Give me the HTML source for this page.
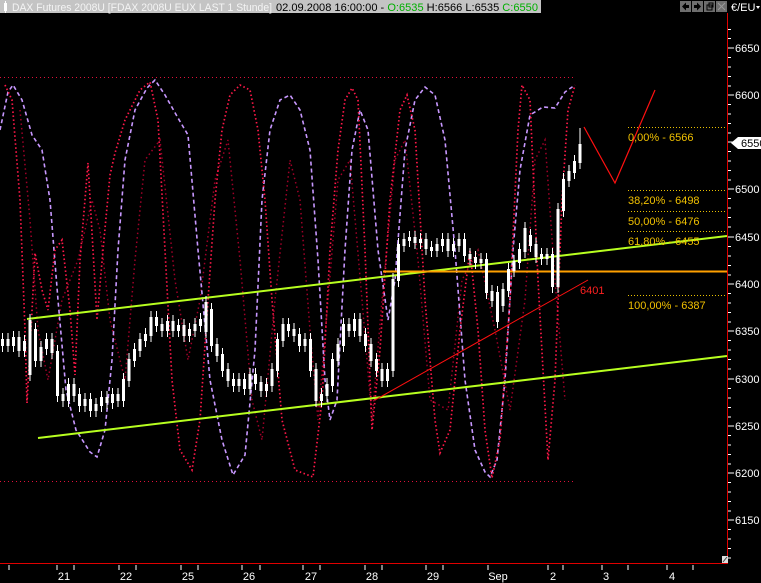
<!DOCTYPE html>
<html><head><meta charset="utf-8"><style>
html,body{margin:0;padding:0;background:#000;width:761px;height:583px;overflow:hidden}
svg{display:block}
text{font-family:"Liberation Sans",sans-serif}
</style></head><body>
<svg width="761" height="583" viewBox="0 0 761 583" xmlns="http://www.w3.org/2000/svg">
<rect width="761" height="583" fill="#000"/>
<!-- title bar -->
<rect x="0" y="0" width="541" height="13" fill="#c4c4c4"/>
<rect x="4" y="3" width="3" height="8" fill="#fff"/><rect x="5" y="1" width="1" height="12" fill="#fff"/>
<text x="12" y="11" font-size="11" fill="#f4f4f4" textLength="260" lengthAdjust="spacingAndGlyphs">DAX Futures 2008U [FDAX 2008U EUX LAST 1 Stunde]</text>
<text x="276" y="11" font-size="11" fill="#000" textLength="262" lengthAdjust="spacingAndGlyphs">02.09.2008 16:00:00 - <tspan fill="#00b000">O:6535</tspan> H:6566 L:6535 <tspan fill="#00b000">C:6550</tspan></text>
<g fill="#6e6e6e"><rect x="680" y="1" width="11" height="11"/><rect x="692" y="1" width="11" height="11"/><rect x="704" y="1" width="11" height="11"/><rect x="716" y="1" width="11" height="11"/></g>
<g fill="#000"><path d="M682 6.5l4-4v2.5h3v3h-3v2.5z"/><path d="M701 6.5l-4-4v2.5h-3v3h3v2.5z"/><rect x="707" y="5" width="5" height="5" fill="none" stroke="#000"/><rect x="709" y="3" width="4" height="4" fill="none" stroke="#000"/><path d="M718 3l7 7M725 3l-7 7" stroke="#999"/></g>
<text x="731" y="11" font-size="11" fill="#fff">€/EU</text><path d="M756 6h4l-2 3z" fill="#fff"/>
<!-- frame -->
<line x1="727.5" y1="13" x2="727.5" y2="564" stroke="#e00000"/>
<line x1="0" y1="563.5" x2="728" y2="563.5" stroke="#e00000"/>
<!-- axis ticks -->
<g stroke="#fff">
<path d="M728 29.5h3M728 38.5h3M728 48h6M728 57.5h3M728 67h3M728 76.5h3M728 86h3M728 95h6M728 104.5h3M728 114h3M728 123.5h3M728 133h3M728 142h6M728 151.5h3M728 161h3M728 170.5h3M728 180h3M728 189h6M728 198.5h3M728 208h3M728 217.5h3M728 227h3M728 237h6M728 246.5h3M728 256h3M728 265.5h3M728 275h3M728 284h6M728 293.5h3M728 303h3M728 312.5h3M728 322h3M728 331h6M728 340.5h3M728 350h3M728 359.5h3M728 369h3M728 379h6M728 388.5h3M728 398h3M728 407.5h3M728 417h3M728 426h6M728 435.5h3M728 445h3M728 454.5h3M728 464h3M728 473h6M728 482.5h3M728 492h3M728 501.5h3M728 511h3M728 520h6M728 529.5h3M728 539h3M728 548.5h3M728 558h3"/>
<path d="M9 565v5M57 565v5M74 565v5M119 565v5M136 565v5M181 565v5M198 565v5M242 565v5M260 565v5M303 565v5M320 565v5M365 565v5M382 565v5M426 565v5M443 565v5M488 565v5M548 565v5M563 565v5M602 565v5M628 565v5M667 565v5M693 565v5"/>
</g>
<g font-size="11" fill="#fff">
<text x="735" y="52">6650</text><text x="735" y="99">6600</text><text x="735" y="193">6500</text><text x="735" y="241">6450</text><text x="735" y="288">6400</text><text x="735" y="335">6350</text><text x="735" y="383">6300</text><text x="735" y="430">6250</text><text x="735" y="477">6200</text><text x="735" y="524">6150</text>
</g>
<path d="M731 143l7-6h23v12h-23z" fill="#fff"/><text x="741" y="147" font-size="11" fill="#000">6550</text>
<path d="M722 556h6v7h-6z" fill="#ddd"/><path d="M723 562l4-5" stroke="#444"/>
<g font-size="11" fill="#fff" text-anchor="middle">
<text x="64" y="580">21</text><text x="126" y="580">22</text><text x="188" y="580">25</text><text x="249" y="580">26</text><text x="311" y="580">27</text><text x="372" y="580">28</text><text x="433" y="580">29</text><text x="498" y="580">Sep</text><text x="553" y="580">2</text><text x="606" y="580">3</text><text x="672" y="580">4</text>
</g>
<!-- dotted boundary lines -->
<line x1="0" y1="77.5" x2="576" y2="77.5" stroke="#e0103a" stroke-dasharray="1 3"/>
<line x1="0" y1="481.5" x2="576" y2="481.5" stroke="#e0103a" stroke-dasharray="1 3"/>
<!-- oscillators -->
<polyline fill="none" stroke="#a00028" stroke-width="1.5" stroke-dasharray="1.5 3" points="20,110 30,220 38,330 48,380 62,300 78,260 92,200 100,230 110,320 125,380 135,260 145,160 160,140 175,280 188,360 200,300 215,180 228,140 240,260 252,400 262,440 275,300 290,160 300,200 310,330 318,420 328,300 338,180 350,160 362,300 372,420 382,300 395,160 405,140 418,260 430,400 448,410 462,280 478,250 495,330 510,410 525,300 535,160 545,140 555,280 565,400"/>
<polyline fill="none" stroke="#c898ff" stroke-width="1.6" stroke-dasharray="4 3" points="0,130 8,92 13,85 22,100 32,135 42,150 50,200 58,300 66,390 76,430 90,452 97,457 105,430 112,360 118,250 125,160 135,110 147,88 155,80 165,95 178,118 188,135 198,250 210,380 222,440 233,475 245,455 255,350 262,200 270,130 280,100 290,95 300,110 310,150 318,260 325,380 330,420 337,400 345,250 352,150 360,110 368,130 378,250 388,320 395,280 405,150 415,100 425,87 435,95 445,140 455,250 465,380 475,450 485,472 490,477 497,460 505,380 513,250 520,170 530,115 543,107 555,108 565,92 575,85"/>
<polyline fill="none" stroke="#ff1848" stroke-width="1.7" stroke-dasharray="1.5 2.5" points="5,85 12,100 20,200 25,330 27,403 31,330 35,253 42,290 48,310 55,250 62,240 70,310 75,375 80,260 88,163 93,250 97,320 103,250 110,175 115,153 125,120 140,90 150,82 158,120 165,250 172,380 180,450 192,470 200,420 208,300 215,200 222,130 230,95 240,85 250,90 258,130 265,200 272,300 282,420 295,470 313,477 322,400 330,250 338,150 345,100 352,88 358,100 365,250 372,430 380,350 390,200 400,110 407,95 415,130 425,300 435,420 440,453 450,430 460,330 470,250 478,330 485,430 492,478 500,440 510,300 518,130 522,85 530,100 538,280 548,460 555,380 562,200 568,110 575,85"/>
<!-- channel lines -->
<line x1="27" y1="319" x2="727" y2="236" stroke="#b8ff20" stroke-width="2"/>
<line x1="38" y1="438" x2="727" y2="356" stroke="#b8ff20" stroke-width="2"/>
<line x1="383" y1="271.5" x2="727" y2="271.5" stroke="#ffa000" stroke-width="2"/>
<line x1="375" y1="400" x2="588" y2="280" stroke="#ff1010" stroke-width="1"/>
<text x="580" y="294" font-size="11" fill="#ff2020">6401</text>
<polyline fill="none" stroke="#ff1010" stroke-width="1.2" points="584,127 615,183 655,90"/>
<!-- fib -->
<g stroke="#e8c000" stroke-dasharray="1 2"><line x1="628" y1="127.5" x2="727" y2="127.5"/><line x1="628" y1="190.5" x2="727" y2="190.5"/><line x1="628" y1="211.5" x2="727" y2="211.5"/><line x1="628" y1="231.5" x2="727" y2="231.5"/><line x1="628" y1="295.5" x2="727" y2="295.5"/></g>
<g font-size="11" fill="#f0c000"><text x="628" y="141">0,00% - 6566</text><text x="628" y="204">38,20% - 6498</text><text x="628" y="225">50,00% - 6476</text><text x="628" y="245">61,80% - 6455</text><text x="628" y="309">100,00% - 6387</text></g>
<!-- candles -->
<g fill="#fff">
<rect x="1" y="339" width="3" height="7"/><rect x="6.5" y="339" width="3" height="7"/><rect x="12" y="337" width="3" height="9"/><rect x="17.5" y="337" width="3" height="14"/><rect x="23" y="341" width="3" height="10"/><rect x="28.5" y="320" width="3" height="55"/><rect x="34" y="329" width="3" height="32"/><rect x="39.5" y="347" width="3" height="14"/><rect x="45" y="339" width="3" height="10"/><rect x="50.5" y="339" width="3" height="14"/><rect x="56" y="351" width="3" height="45"/><rect x="61.5" y="394" width="3" height="7"/><rect x="67" y="384" width="3" height="17"/><rect x="72.5" y="384" width="3" height="12"/><rect x="78" y="394" width="3" height="12"/><rect x="83.5" y="399" width="3" height="7"/><rect x="89" y="399" width="3" height="12"/><rect x="94.5" y="404" width="3" height="7"/><rect x="100" y="397" width="3" height="9"/><rect x="105.5" y="397" width="3" height="6"/><rect x="111" y="394" width="3" height="9"/><rect x="116.5" y="394" width="3" height="7"/><rect x="122" y="379" width="3" height="22"/><rect x="127.5" y="359" width="3" height="22"/><rect x="133" y="349" width="3" height="12"/><rect x="138.5" y="339" width="3" height="12"/><rect x="144" y="334" width="3" height="7"/><rect x="149.5" y="317" width="3" height="19"/><rect x="155" y="317" width="3" height="9"/><rect x="160.5" y="324" width="3" height="7"/><rect x="166" y="321" width="3" height="10"/><rect x="171.5" y="321" width="3" height="10"/><rect x="177" y="325" width="3" height="6"/><rect x="182.5" y="325" width="3" height="11"/><rect x="188" y="329" width="3" height="7"/><rect x="193.5" y="324" width="3" height="7"/><rect x="199" y="319" width="3" height="7"/><rect x="204.5" y="302" width="3" height="30"/><rect x="210" y="309" width="3" height="37"/><rect x="215.5" y="344" width="3" height="12"/><rect x="221" y="354" width="3" height="17"/><rect x="226.5" y="369" width="3" height="12"/><rect x="232" y="379" width="3" height="7"/><rect x="237.5" y="379" width="3" height="7"/><rect x="243" y="379" width="3" height="10"/><rect x="248.5" y="374" width="3" height="15"/><rect x="254" y="374" width="3" height="10"/><rect x="259.5" y="382" width="3" height="9"/><rect x="265" y="384" width="3" height="7"/><rect x="270.5" y="369" width="3" height="17"/><rect x="276" y="339" width="3" height="32"/><rect x="281.5" y="324" width="3" height="17"/><rect x="287" y="324" width="3" height="7"/><rect x="292.5" y="329" width="3" height="7"/><rect x="298" y="334" width="3" height="12"/><rect x="303.5" y="339" width="3" height="7"/><rect x="309" y="339" width="3" height="32"/><rect x="314.5" y="369" width="3" height="32"/><rect x="320" y="394" width="3" height="7"/><rect x="325.5" y="384" width="3" height="12"/><rect x="331" y="359" width="3" height="27"/><rect x="336.5" y="344" width="3" height="17"/><rect x="342" y="324" width="3" height="22"/><rect x="347.5" y="324" width="3" height="7"/><rect x="353" y="319" width="3" height="12"/><rect x="358.5" y="319" width="3" height="17"/><rect x="364" y="334" width="3" height="12"/><rect x="369.5" y="344" width="3" height="17"/><rect x="375" y="359" width="3" height="12"/><rect x="380.5" y="369" width="3" height="12"/><rect x="386" y="369" width="3" height="12"/><rect x="391.5" y="279" width="3" height="92"/><rect x="397" y="244" width="3" height="37"/><rect x="402.5" y="239" width="3" height="7"/><rect x="408" y="237" width="3" height="4"/><rect x="413.5" y="237" width="3" height="6"/><rect x="419" y="239" width="3" height="4"/><rect x="424.5" y="239" width="3" height="10"/><rect x="430" y="247" width="3" height="4"/><rect x="435.5" y="244" width="3" height="7"/><rect x="441" y="239" width="3" height="7"/><rect x="446.5" y="239" width="3" height="12"/><rect x="452" y="244" width="3" height="7"/><rect x="457.5" y="239" width="3" height="7"/><rect x="463" y="239" width="3" height="17"/><rect x="468.5" y="254" width="3" height="5"/><rect x="474" y="257" width="3" height="6"/><rect x="479.5" y="259" width="3" height="4"/><rect x="485" y="259" width="3" height="34"/><rect x="490.5" y="291" width="3" height="10"/><rect x="496" y="292" width="3" height="30"/><rect x="501.5" y="289" width="3" height="17"/><rect x="507" y="269" width="3" height="22"/><rect x="512.5" y="261" width="3" height="10"/><rect x="518" y="249" width="3" height="14"/><rect x="523.5" y="228" width="3" height="24"/><rect x="529" y="235" width="3" height="11"/><rect x="534.5" y="244" width="3" height="13"/><rect x="540" y="254" width="3" height="5"/><rect x="545.5" y="254" width="3" height="5"/><rect x="551" y="254" width="3" height="33"/><rect x="556.5" y="209" width="3" height="78"/><rect x="562" y="179" width="3" height="32"/><rect x="567.5" y="171" width="3" height="10"/><rect x="573" y="161" width="3" height="12"/><rect x="578.5" y="144" width="3" height="19"/>
</g>
<path stroke="#fff" stroke-width="1" fill="none" d="M2.5 333v19M8 333v19M13.5 331v21M19 331v26M24.5 335v22M30 314v67M35.5 323v44M41 341v26M46.5 333v22M52 333v26M57.5 345v57M63 388v19M68.5 378v29M74 378v24M79.5 388v24M85 393v19M90.5 393v24M96 398v19M101.5 391v21M107 391v18M112.5 388v21M118 388v19M123.5 373v34M129 353v34M134.5 343v24M140 333v24M145.5 328v19M151 311v31M156.5 311v21M162 318v19M167.5 315v22M173 315v22M178.5 319v18M184 319v23M189.5 323v19M195 318v19M200.5 313v19M206 296v42M211.5 303v49M217 338v24M222.5 348v29M228 363v24M233.5 373v19M239 373v19M244.5 373v22M250 368v27M255.5 368v22M261 376v21M266.5 378v19M272 363v29M277.5 333v44M283 318v29M288.5 318v19M294 323v19M299.5 328v24M305 333v19M310.5 333v44M316 363v44M321.5 388v19M327 378v24M332.5 353v39M338 338v29M343.5 318v34M349 318v19M354.5 313v24M360 313v29M365.5 328v24M371 338v29M376.5 353v24M382 363v24M387.5 363v24M393 273v104M398.5 238v49M404 233v19M409.5 231v16M415 231v18M420.5 233v16M426 233v22M431.5 241v16M437 238v19M442.5 233v19M448 233v24M453.5 238v19M459 233v19M464.5 233v29M470 248v17M475.5 251v18M481 253v16M486.5 253v46M492 285v22M497.5 286v42M503 283v29M508.5 263v34M514 255v22M519.5 243v26M525 222v36M530.5 229v23M536 238v25M541.5 248v17M547 248v17M552.5 248v45M558 203v90M563.5 173v44M569 165v22M574.5 155v24M580 128v41"/>
</svg>
</body></html>
